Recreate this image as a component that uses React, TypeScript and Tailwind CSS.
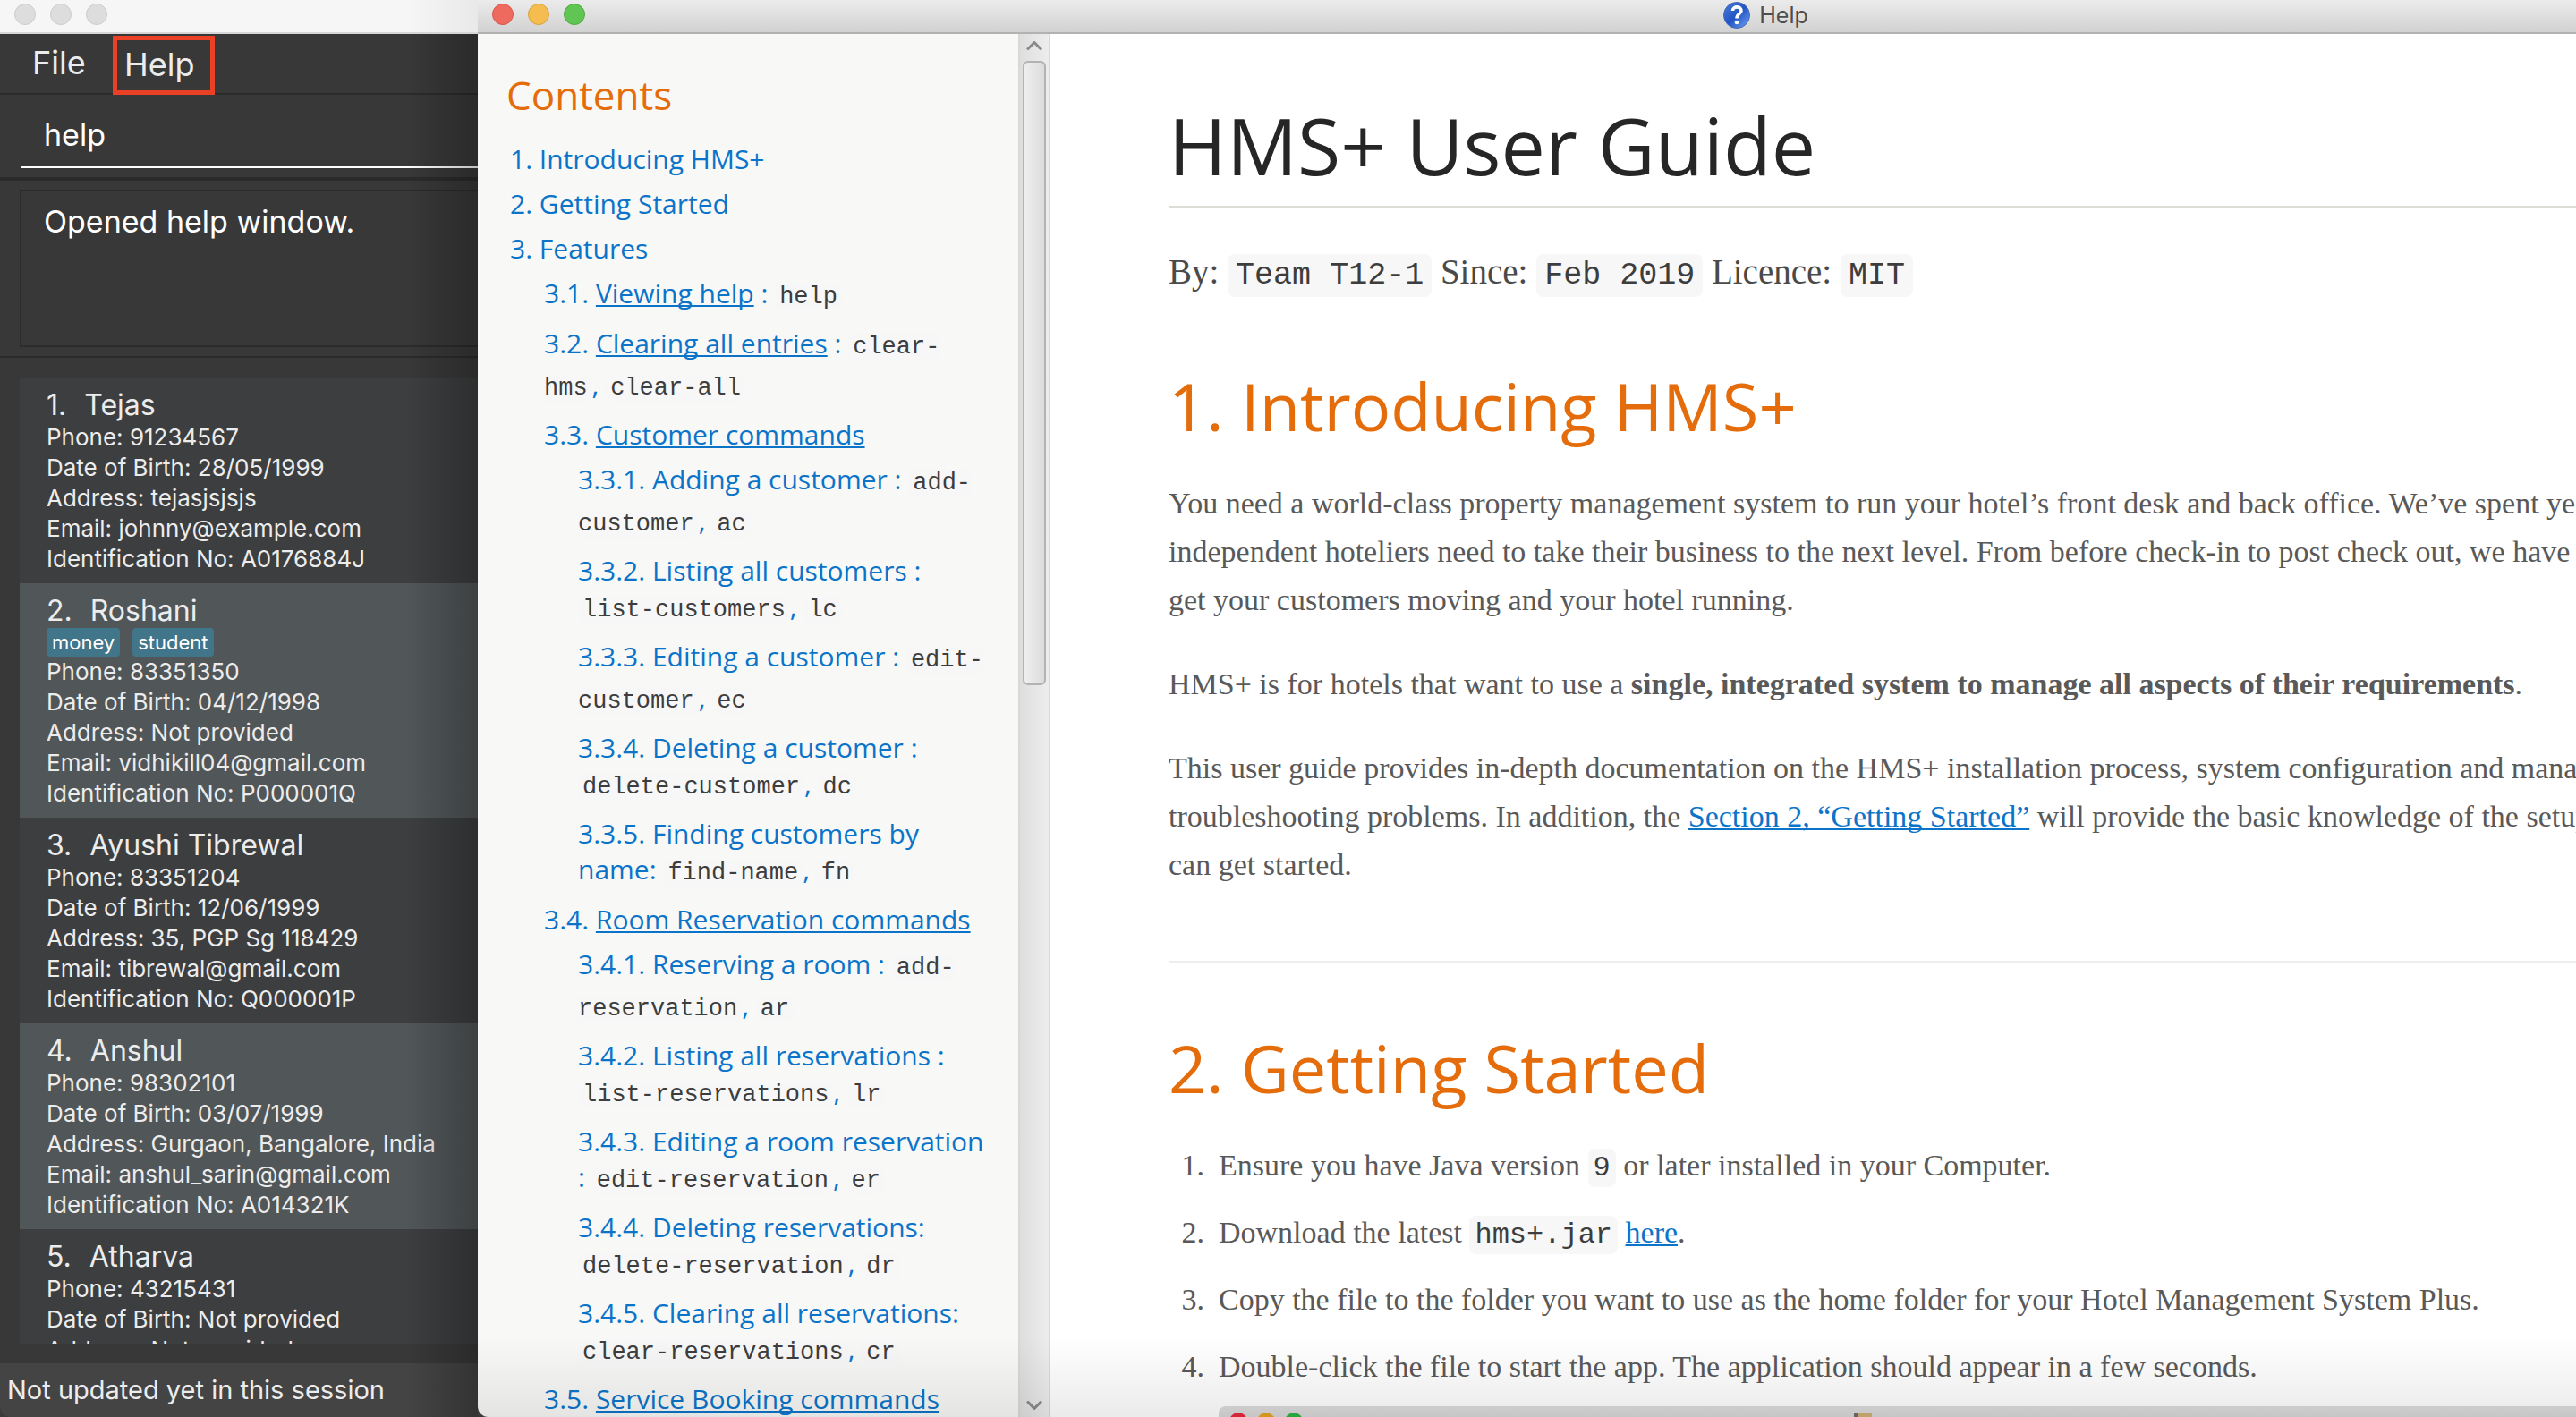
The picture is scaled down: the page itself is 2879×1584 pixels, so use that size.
import type { ReactNode } from "react";

type Customer = { name: string; tags?: string[]; lines: string[] };

const customers: Customer[] = [
  {
    name: "Tejas",
    lines: [
      "Phone: 91234567",
      "Date of Birth: 28/05/1999",
      "Address: tejasjsjsjs",
      "Email: johnny@example.com",
      "Identification No: A0176884J",
    ],
  },
  {
    name: "Roshani",
    tags: ["money", "student"],
    lines: [
      "Phone: 83351350",
      "Date of Birth: 04/12/1998",
      "Address: Not provided",
      "Email: vidhikill04@gmail.com",
      "Identification No: P000001Q",
    ],
  },
  {
    name: "Ayushi Tibrewal",
    lines: [
      "Phone: 83351204",
      "Date of Birth: 12/06/1999",
      "Address: 35, PGP Sg 118429",
      "Email: tibrewal@gmail.com",
      "Identification No: Q000001P",
    ],
  },
  {
    name: "Anshul",
    lines: [
      "Phone: 98302101",
      "Date of Birth: 03/07/1999",
      "Address: Gurgaon, Bangalore, India",
      "Email: anshul_sarin@gmail.com",
      "Identification No: A014321K",
    ],
  },
  {
    name: "Atharva",
    lines: ["Phone: 43215431", "Date of Birth: Not provided", "Address: Not provided"],
  },
];

type TocEntry = {
  no: string;
  title: string;
  underlined?: boolean;
  suffix?: string;
  codes?: string[];
  children?: TocEntry[];
};

const toc: TocEntry[] = [
  { no: "1.", title: "Introducing HMS+" },
  { no: "2.", title: "Getting Started" },
  {
    no: "3.",
    title: "Features",
    children: [
      { no: "3.1.", title: "Viewing help", underlined: true, suffix: " :", codes: ["help"] },
      {
        no: "3.2.",
        title: "Clearing all entries",
        underlined: true,
        suffix: " :",
        codes: ["clear-hms", "clear-all"],
      },
      {
        no: "3.3.",
        title: "Customer commands",
        underlined: true,
        children: [
          { no: "3.3.1.", title: "Adding a customer :", codes: ["add-customer", "ac"] },
          { no: "3.3.2.", title: "Listing all customers :", codes: ["list-customers", "lc"] },
          { no: "3.3.3.", title: "Editing a customer :", codes: ["edit-customer", "ec"] },
          { no: "3.3.4.", title: "Deleting a customer :", codes: ["delete-customer", "dc"] },
          { no: "3.3.5.", title: "Finding customers by name:", codes: ["find-name", "fn"] },
        ],
      },
      {
        no: "3.4.",
        title: "Room Reservation commands",
        underlined: true,
        children: [
          { no: "3.4.1.", title: "Reserving a room :", codes: ["add-reservation", "ar"] },
          { no: "3.4.2.", title: "Listing all reservations :", codes: ["list-reservations", "lr"] },
          { no: "3.4.3.", title: "Editing a room reservation :", codes: ["edit-reservation", "er"] },
          { no: "3.4.4.", title: "Deleting reservations:", codes: ["delete-reservation", "dr"] },
          { no: "3.4.5.", title: "Clearing all reservations:", codes: ["clear-reservations", "cr"] },
        ],
      },
      { no: "3.5.", title: "Service Booking commands", underlined: true },
    ],
  },
];

function TrafficLights({ colors }: { colors: string[] }) {
  return (
    <div className="flex gap-4">
      {colors.map((c, i) => (
        <button key={i} type="button" aria-label={["Close", "Minimise", "Zoom"][i]} className={`size-6 rounded-full border ${c}`} />
      ))}
    </div>
  );
}

function CustomerCard({ customer, index }: { customer: Customer; index: number }) {
  return (
    <li className={`pt-3 pb-[10px] pl-[30px] ${index % 2 ? "bg-[#515658]" : "bg-[#3c3e3f]"}`}>
      <div className="flex gap-5 text-[32px] leading-[38px]">
        <span>{index + 1}.</span>
        <span>{customer.name}</span>
      </div>
      {customer.tags && (
        <div className="flex gap-[14px]">
          {customer.tags.map((t) => (
            <span key={t} className="rounded bg-[#41758a] px-[6px] text-[22px] leading-8 text-white">
              {t}
            </span>
          ))}
        </div>
      )}
      {customer.lines.map((l) => (
        <p key={l} className="text-[26px] leading-[34px]">
          {l}
        </p>
      ))}
    </li>
  );
}

function MainWindow() {
  return (
    <section className="relative flex w-[534px] shrink-0 flex-col overflow-hidden rounded-bl-xl bg-[#383838] font-['Inter',sans-serif] text-[#ececec]">
      <header className="relative z-10 flex h-[38px] shrink-0 items-start border-b-2 border-[#d6d6d6] bg-linear-to-r from-[#f6f6f6] from-85% to-[#e9e9e9] px-4 pt-1">
        <TrafficLights
          colors={[
            "border-[#cccccc] bg-[#dddddd]",
            "border-[#cccccc] bg-[#dddddd]",
            "border-[#cccccc] bg-[#dddddd]",
          ]}
        />
      </header>
      <nav className="flex h-[68px] shrink-0 border-b-2 border-[#2b2b2b] pl-[26px] text-[36px]">
        <button type="button" className="h-[66px] w-[100px] pb-[2px] pl-[10px] text-left">
          File
        </button>
        <button type="button" className="mt-[2px] h-[66px] w-[114px] border-[5px] border-[#ea4025] pb-[6px] pl-2 text-left">
          Help
        </button>
      </nav>
      <div className="h-24 shrink-0 border-b-4 border-[#2b2b2b] pl-6">
        <input
          aria-label="Command"
          defaultValue="help"
          className="h-[82px] w-full border-b-2 border-white bg-transparent pt-2 pl-[25px] text-[34px] text-white outline-none"
        />
      </div>
      <div className="h-[198px] shrink-0 border-b-2 border-[#2b2b2b] py-[10px] pl-[22px]">
        <div className="h-full border-2 border-r-0 border-[#2b2b2b] pt-3 pl-[25px] text-[34px] leading-[44px] text-white">
          Opened help window.
        </div>
      </div>
      <ul className="mt-[22px] min-h-0 flex-1 overflow-hidden pl-[22px]">
        {customers.map((c, i) => (
          <CustomerCard key={c.name} customer={c} index={i} />
        ))}
      </ul>
      <footer className="mt-[22px] h-[60px] shrink-0 bg-[#444444] pl-2 text-[29px] leading-[60px]">
        Not updated yet in this session
      </footer>
      <div className="pointer-events-none absolute inset-y-0 right-0 w-20 bg-linear-to-l from-black/25 to-transparent" />
    </section>
  );
}

function TocItem({ entry }: { entry: TocEntry }) {
  return (
    <li className="mt-[10px]">
      <a href="#guide" className="block text-[#0b74c9]">
        {entry.no}{" "}
        {entry.underlined ? (
          <span className="underline decoration-2 underline-offset-[2px] [text-decoration-skip-ink:none]">{entry.title}</span>
        ) : (
          entry.title
        )}
        {entry.suffix}
        {entry.codes?.map((c, i) => (
          <span key={c}>
            {i > 0 ? ", " : " "}
            <code className="rounded-lg bg-[#f7f7f8] px-[5px] font-['Liberation_Mono',monospace] text-[27px] leading-[44px] text-[#3d3d3d]">
              {c}
            </code>
          </span>
        ))}
      </a>
      {entry.children && (
        <ul className="pl-[38px]">
          {entry.children.map((e) => (
            <TocItem key={e.no} entry={e} />
          ))}
        </ul>
      )}
    </li>
  );
}

function Chevron({ up }: { up?: boolean }) {
  return (
    <svg viewBox="0 0 18 10" className="h-[10px] w-[18px] shrink-0" fill="none" stroke="#8a8a8a" strokeWidth="3">
      <path d={up ? "M1 9.500L9 1.500L17 9.500" : "M1 .5L9 8.500L17 .5"} />
    </svg>
  );
}

function Sidebar() {
  return (
    <aside className="flex w-[640px] shrink-0 overflow-hidden bg-[#f8f8f7]">
      <div className="min-w-0 flex-1 overflow-hidden pr-8 pl-8 font-['Open_Sans',sans-serif]">
        <h2 className="mt-[38px] text-[44px] leading-[60px] text-[#e46c0a]">Contents</h2>
        <ul className="mt-[22px] pl-1 text-[30px] leading-10">
          {toc.map((e) => (
            <TocItem key={e.no} entry={e} />
          ))}
        </ul>
      </div>
      <div className="flex w-[36px] flex-col items-center border-x-2 border-[#d9d9d9] bg-linear-to-r from-[#dedede] to-[#ededed] py-2">
        <Chevron up />
        <div className="mt-3 h-[698px] w-[26px] rounded-md border-2 border-[#b3b3b3] bg-linear-to-r from-[#efefef] to-[#dcdcdc]" />
        <div className="flex-1" />
        <Chevron />
      </div>
    </aside>
  );
}

function Code({ large, children }: { large?: boolean; children: ReactNode }) {
  return (
    <code
      className={
        large
          ? "rounded-lg bg-[#f7f7f8] px-[9px] py-1 font-['Liberation_Mono',monospace] text-[35px] leading-10 text-[#3d3d3d]"
          : "rounded-lg bg-[#f7f7f8] px-[6px] py-[3px] font-['Liberation_Mono',monospace] text-[32px] leading-10 text-[#3d3d3d]"
      }
    >
      {children}
    </code>
  );
}

function GuideLink({ children }: { children: ReactNode }) {
  return (
    <a href="#guide" className="text-[#0b74c9] underline decoration-2 underline-offset-[2px] [text-decoration-skip-ink:none]">
      {children}
    </a>
  );
}

function Step({ no, children }: { no: number; children: ReactNode }) {
  return (
    <li className="mb-[21px] flex">
      <span className="w-10 text-right">{no}.</span>
      <span className="pl-4">{children}</span>
    </li>
  );
}

function Guide() {
  return (
    <article
      id="guide"
      className="min-w-0 flex-1 overflow-hidden bg-white pl-[132px] font-['Liberation_Serif',serif] text-[34px] leading-[54px] whitespace-nowrap text-[#595959]"
    >
      <h1 className="mt-[60px] h-[134px] border-b-2 border-[#ddddd8] font-['Open_Sans',sans-serif] text-[88px] leading-[128px] text-[#262626]">
        HMS+ User Guide
      </h1>
      <p className="mt-[45px] text-[39px] text-[#4a4a4a]">
        By: <Code large>Team T12-1</Code> Since: <Code large>Feb 2019</Code> Licence: <Code large>MIT</Code>
      </p>
      <h2 className="mt-[73px] font-['Open_Sans',sans-serif] text-[74px] leading-[100px] text-[#e46c0a]">1. Introducing HMS+</h2>
      <p className="mt-8">
        You need a world-class property management system to run your hotel’s front desk and back office. We’ve spent years
        <br />
        independent hoteliers need to take their business to the next level. From before check-in to post check out, we have
        <br />
        get your customers moving and your hotel running.
      </p>
      <p className="mt-10">
        HMS+ is for hotels that want to use a <strong>single, integrated system to manage all aspects of their requirements</strong>.
      </p>
      <p className="mt-10">
        This user guide provides in-depth documentation on the HMS+ installation process, system configuration and managing
        <br />
        troubleshooting problems. In addition, the <GuideLink>Section 2, “Getting Started”</GuideLink> will provide the basic
        knowledge of the setup
        <br />
        can get started.
      </p>
      <hr className="mt-20 border-t-2 border-[#eeeeed]" />
      <h2 className="mt-[68px] font-['Open_Sans',sans-serif] text-[74px] leading-[100px] text-[#e46c0a]">2. Getting Started</h2>
      <ol className="mt-8">
        <Step no={1}>
          Ensure you have Java version <Code>9</Code> or later installed in your Computer.
        </Step>
        <Step no={2}>
          Download the latest <Code>hms+.jar</Code> <GuideLink>here</GuideLink>.
        </Step>
        <Step no={3}>Copy the file to the folder you want to use as the home folder for your Hotel Management System Plus.</Step>
        <Step no={4}>Double-click the file to start the app. The application should appear in a few seconds.</Step>
      </ol>
      <div className="-mt-1 ml-14 flex h-16 items-start gap-[11px] rounded-tl-lg bg-linear-to-b from-[#dcdcdc] to-[#c4c4c4] pt-[7px] pl-3">
        <span className="size-5 rounded-full bg-[#e8283c]" />
        <span className="size-5 rounded-full bg-[#e2a31f]" />
        <span className="size-5 rounded-full bg-[#2bb342]" />
        <span className="ml-[605px] size-5 border-l-4 border-[#6b6b6b] bg-[#cdb074]" />
      </div>
    </article>
  );
}

function HelpWindow() {
  return (
    <section className="relative flex w-screen shrink-0 flex-col overflow-hidden rounded-bl-xl">
      <header className="grid h-[38px] shrink-0 grid-cols-3 items-start border-b-2 border-[#b2b2b2] bg-linear-to-b from-[#ebebeb] to-[#d2d2d2] px-4">
        <div className="pt-1">
          <TrafficLights
            colors={["border-[#d9564d] bg-[#ee6a5f]", "border-[#d9a23c] bg-[#f5bd4f]", "border-[#51a73d] bg-[#61c554]"]}
          />
        </div>
        <div className="flex items-center justify-center gap-[10px] pt-px font-['Inter',sans-serif] text-[25px] leading-8 text-[#4d4d4d]">
          <svg viewBox="0 0 30 30" className="size-[30px]" fill="none">
            <defs>
              <linearGradient id="ball" x1="0" y1="0" x2="1" y2="1">
                <stop offset="0" stopColor="#4a7bdc" />
                <stop offset=".5" stopColor="#2355c4" />
                <stop offset="1" stopColor="#6ea6f4" />
              </linearGradient>
            </defs>
            <circle cx="15" cy="15" r="14.500" fill="url(#ball)" stroke="#4668b4" />
            <path d="M10.500 10C10.500 4.500 20 4.500 20 10C20 13.500 15 13.500 15 18.500" stroke="#fff" strokeWidth="3.600" />
            <circle cx="15" cy="23" r="2.300" fill="#fff" />
          </svg>
          Help
        </div>
      </header>
      <div className="flex min-h-0 flex-1">
        <Sidebar />
        <Guide />
      </div>
      <div className="pointer-events-none absolute inset-x-0 bottom-0 h-[90px] bg-linear-to-t from-black/8 to-transparent" />
    </section>
  );
}

export default function App() {
  return (
    <main className="flex h-screen overflow-hidden bg-[#3a3a3a]">
      <MainWindow />
      <HelpWindow />
    </main>
  );
}
